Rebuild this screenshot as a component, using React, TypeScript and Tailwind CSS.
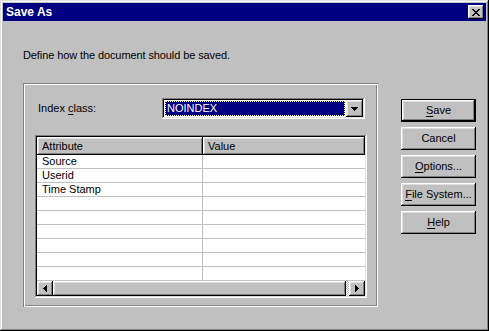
import React from "react";

const raised =
  "shadow-[inset_-1px_-1px_#000,inset_1px_1px_#fff,inset_-2px_-2px_#808080,inset_2px_2px_#dfdfdf]";
const sunken =
  "shadow-[inset_-1px_-1px_#fff,inset_1px_1px_#808080,inset_-2px_-2px_#dfdfdf,inset_2px_2px_#000]";

function CloseGlyph() {
  return (
    <svg width="8" height="7" viewBox="0 0 8 7" shapeRendering="crispEdges">
      <path
        fill="#000"
        d="M0 0h2v1H0z M6 0h2v1H6z M1 1h2v1H1z M5 1h2v1H5z M2 2h4v1H2z M3 3h2v1H3z M2 4h4v1H2z M1 5h2v1H1z M5 5h2v1H5z M0 6h2v1H0z M6 6h2v1H6z"
      />
    </svg>
  );
}

function Btn({ children, isDefault }: { children: React.ReactNode; isDefault?: boolean }) {
  if (isDefault) {
    return (
      <div className="w-[75px] h-[23px] border border-black">
        <div className={`w-full h-full bg-[#c0c0c0] ${raised} flex items-center justify-center`}>
          {children}
        </div>
      </div>
    );
  }
  return (
    <div className={`w-[75px] h-[23px] bg-[#c0c0c0] ${raised} flex items-center justify-center`}>
      {children}
    </div>
  );
}

const rows = ["Source", "Userid", "Time Stamp", "", "", "", "", "", ""];

export default function App() {
  return (
    <div className="w-[489px] h-[331px] bg-[#c0c0c0] p-[3px] flex flex-col shadow-[inset_-1px_-1px_#000,inset_1px_1px_#dfdfdf,inset_-2px_-2px_#808080,inset_2px_2px_#fff] font-['Liberation_Sans',Arial,sans-serif] text-[11px] leading-[13px] text-black">
      {/* Title bar */}
      <div className="h-[18px] bg-[#000080] flex items-center justify-between pl-[3px] pr-[2px]">
        <span className="text-white font-bold text-[12px] leading-[14px]">Save As</span>
        <div className={`w-[16px] h-[14px] bg-[#c0c0c0] ${raised} flex items-center justify-center`}>
          <CloseGlyph />
        </div>
      </div>

      {/* Body */}
      <div className="pl-[20px] pt-[28px]">
        <div className="tracking-[-0.1px]">Define how the document should be saved.</div>
        <div className="flex mt-[21px]">
          {/* Group box */}
          <div className="w-[355px] h-[224px] shadow-[inset_1px_1px_#808080,inset_-1px_-1px_#fff,inset_2px_2px_#fff,inset_-2px_-2px_#808080] pt-[15px] pl-[12px]">
            <div className="flex items-center">
              <div className="w-[127px] pl-[3px]">
                Index <span className="underline underline-offset-2">c</span>lass:
              </div>
              <div className={`w-[203px] h-[21px] bg-white ${sunken} p-[2px] flex`}>
                <div className="flex-1 p-[1px]">
                  <div className="h-full bg-[#000080] border border-dotted border-[#ffffa0] text-white flex items-center pl-[1px]">
                    NOINDEX
                  </div>
                </div>
                <div className={`w-[17px] h-[17px] bg-[#c0c0c0] ${raised} flex items-center justify-center`}>
                  <svg width="7" height="4" viewBox="0 0 7 4" shapeRendering="crispEdges">
                    <path fill="#000" d="M0 0h7v1H0z M1 1h5v1H1z M2 2h3v1H2z M3 3h1v1H3z" />
                  </svg>
                </div>
              </div>
            </div>

            {/* List view */}
            <div className={`mt-[16px] w-[332px] h-[163px] bg-white ${sunken} p-[2px] flex flex-col`}>
              <div className="flex h-[18px]">
                <div className={`w-[166px] bg-[#c0c0c0] ${raised} pl-[5px] pt-[1px] flex items-center`}>Attribute</div>
                <div className={`flex-1 bg-[#c0c0c0] ${raised} pl-[5px] pt-[1px] flex items-center`}>Value</div>
              </div>
              {rows.map((r, i) => (
                <div key={i} className="flex h-[14px] border-b border-[#c0c0c0]">
                  <div className="w-[166px] pl-[5px] border-r border-[#c0c0c0] leading-[13px]">{r}</div>
                  <div className="flex-1" />
                </div>
              ))}
              {/* Horizontal scrollbar */}
              <div className="flex h-[15px]">
                <div className={`w-[16px] h-[15px] bg-[#c0c0c0] ${raised} flex items-center justify-center`}>
                  <svg width="4" height="7" viewBox="0 0 4 7" shapeRendering="crispEdges">
                    <path fill="#000" d="M3 0h1v7H3z M2 1h1v5H2z M1 2h1v3H1z M0 3h1v1H0z" />
                  </svg>
                </div>
                <div className={`flex-1 bg-[#c0c0c0] ${raised}`} />
                <div className="w-[3px] bg-[repeating-conic-gradient(#c0c0c0_0_25%,#ffffff_0_50%)] bg-[length:2px_2px]" />
                <div className={`w-[16px] h-[15px] bg-[#c0c0c0] ${raised} flex items-center justify-center`}>
                  <svg width="4" height="7" viewBox="0 0 4 7" shapeRendering="crispEdges">
                    <path fill="#000" d="M0 0h1v7H0z M1 1h1v5H1z M2 2h1v3H2z M3 3h1v1H3z" />
                  </svg>
                </div>
              </div>
            </div>
          </div>

          {/* Buttons */}
          <div className="ml-[23px] pt-[16px] flex flex-col gap-[5px]">
            <Btn isDefault>
              <span><span className="underline underline-offset-2">S</span>ave</span>
            </Btn>
            <Btn>Cancel</Btn>
            <Btn>
              <span><span className="underline underline-offset-2">O</span>ptions...</span>
            </Btn>
            <Btn>
              <span><span className="underline underline-offset-2">F</span>ile System...</span>
            </Btn>
            <Btn>
              <span><span className="underline underline-offset-2">H</span>elp</span>
            </Btn>
          </div>
        </div>
      </div>
    </div>
  );
}
